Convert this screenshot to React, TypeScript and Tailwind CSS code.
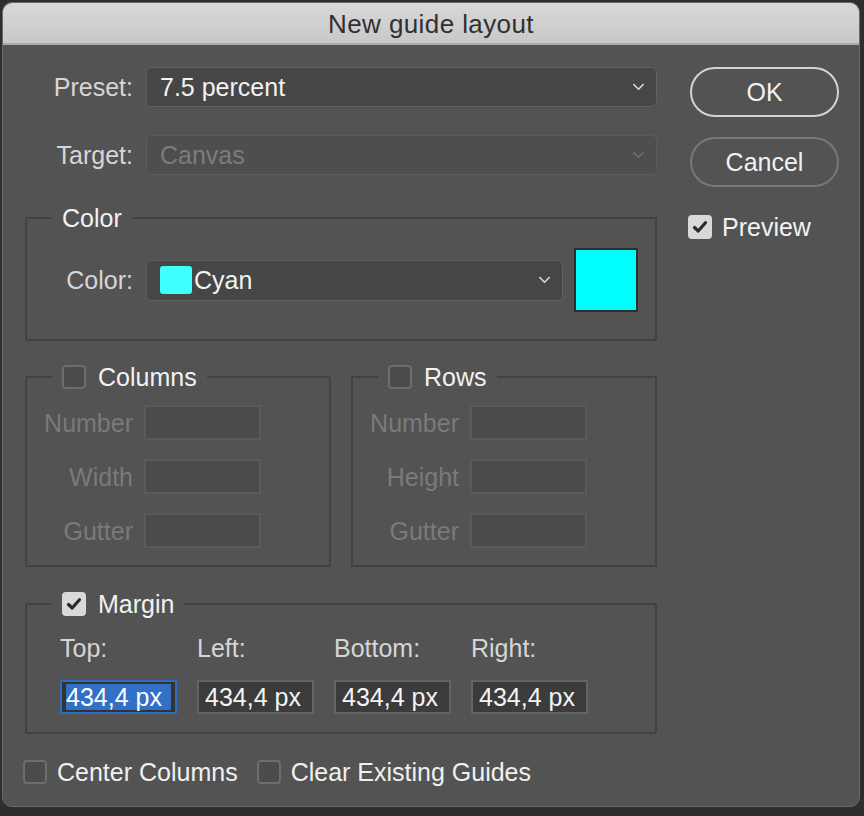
import React from "react";

const Chevron = ({ color = "#d8d8d8" }: { color?: string }) => (
  <svg width="13" height="8" viewBox="0 0 13 8" fill="none">
    <path d="M1.8 1.5 L6.5 6.3 L11.2 1.5" stroke={color} strokeWidth="1.6" strokeLinecap="round" strokeLinejoin="round" />
  </svg>
);

const Check = ({ checked }: { checked?: boolean }) =>
  checked ? (
    <div className="w-[24px] h-[24px] rounded-[4px] bg-[#d9d9d9] flex items-center justify-center shrink-0">
      <svg width="16" height="14" viewBox="0 0 16 14" fill="none">
        <path d="M2.5 7.5 L6.2 11 L13.5 2.8" stroke="#2b2b2b" strokeWidth="3.2" strokeLinecap="round" strokeLinejoin="round" />
      </svg>
    </div>
  ) : (
    <div className="w-[24px] h-[24px] rounded-[4px] bg-[#4b4b4b] border-2 border-[#6d6d6d] shrink-0" />
  );

const DisabledField = ({ label }: { label: string }) => (
  <div className="flex items-center h-[35px]">
    <div className="w-[106px] text-right text-[#7a7a7a]">{label}</div>
    <div className="ml-[11px] w-[117px] h-[35px] bg-[#4b4b4b] border-2 border-[#5a5a5a]" />
  </div>
);

export default function App() {
  return (
    <div
      className="w-[864px] h-[816px] bg-[#2e2e2e] overflow-hidden pt-[2px] pl-[2px]"
      style={{ fontFamily: '"Liberation Sans", Arial, sans-serif' }}
    >
      <div className="w-[858px] h-[805px] rounded-[10px] overflow-hidden bg-[#535353] flex flex-col border border-[#6a6a6a] text-[25px] leading-[28px]">
        {/* Title bar */}
        <div className="h-[42px] shrink-0 bg-gradient-to-b from-[#d8d8d8] to-[#c8c8c8] border-b-2 border-[#a9a9a9] flex items-center justify-center pt-[2px]">
          <span className="text-[#303030] text-[26px] tracking-[0.4px]">New guide layout</span>
        </div>

        {/* Body */}
        <div className="flex pl-[22px] pt-[22px]">
          {/* Left column */}
          <div className="w-[632px] flex flex-col">
            {/* Preset */}
            <div className="flex items-center h-[40px]">
              <div className="w-[108px] text-right text-[#d6d6d6]">Preset:</div>
              <div className="ml-[13px] w-[511px] h-[40px] rounded-[5px] bg-[#464646] border border-[#606060] flex items-center pl-[13px] pr-[11px]">
                <span className="text-[#f2f2f2] flex-1">7.5 percent</span>
                <Chevron />
              </div>
            </div>
            {/* Target */}
            <div className="flex items-center h-[40px] mt-[28px]">
              <div className="w-[108px] text-right text-[#d6d6d6]">Target:</div>
              <div className="ml-[13px] w-[511px] h-[40px] rounded-[5px] bg-[#4e4e4e] border border-[#5c5c5c] flex items-center pl-[13px] pr-[11px]">
                <span className="text-[#7c7c7c] flex-1">Canvas</span>
                <Chevron color="#6e6e6e" />
              </div>
            </div>

            {/* Color group */}
            <fieldset className="mt-[29px] border-2 border-[#424242] rounded-[2px] pb-[27px]">
              <legend className="ml-[25px] px-[10px] text-[#f2f2f2]">Color</legend>
              <div className="flex items-center mt-[16px] h-[64px]">
                <div className="w-[106px] text-right text-[#d6d6d6]">Color:</div>
                <div className="ml-[13px] w-[417px] h-[41px] rounded-[5px] bg-[#464646] border border-[#606060] flex items-center pl-[13px] pr-[11px]">
                  <div className="w-[32px] h-[28px] rounded-[3px] bg-[#40ffff] mr-[2px]" />
                  <span className="text-[#f2f2f2] flex-1">Cyan</span>
                  <Chevron />
                </div>
                <div className="ml-[11px] w-[64px] h-[64px] bg-[#00ffff] border-2 border-[#2e2e2e]" />
              </div>
            </fieldset>

            {/* Columns / Rows */}
            <div className="flex gap-[20px] mt-[22px]">
              <fieldset className="w-[306px] border-2 border-[#424242] rounded-[2px] pb-[17px]">
                <legend className="ml-[25px] px-[10px]">
                  <div className="flex items-center gap-[12px] text-[#f2f2f2]">
                    <Check />
                    <span>Columns</span>
                  </div>
                </legend>
                <div className="flex flex-col gap-[19px] mt-[14px]">
                  <DisabledField label="Number" />
                  <DisabledField label="Width" />
                  <DisabledField label="Gutter" />
                </div>
              </fieldset>
              <fieldset className="w-[306px] border-2 border-[#424242] rounded-[2px] pb-[17px]">
                <legend className="ml-[25px] px-[10px]">
                  <div className="flex items-center gap-[12px] text-[#f2f2f2]">
                    <Check />
                    <span>Rows</span>
                  </div>
                </legend>
                <div className="flex flex-col gap-[19px] mt-[14px]">
                  <DisabledField label="Number" />
                  <DisabledField label="Height" />
                  <DisabledField label="Gutter" />
                </div>
              </fieldset>
            </div>

            {/* Margin */}
            <fieldset className="mt-[23px] border-2 border-[#424242] rounded-[2px] pb-[18px]">
              <legend className="ml-[25px] px-[10px]">
                <div className="flex items-center gap-[12px] text-[#f2f2f2]">
                  <Check checked />
                  <span>Margin</span>
                </div>
              </legend>
              <div className="grid grid-cols-[117px_117px_117px_117px] gap-x-[20px] pl-[33px] mt-[16px]">
                <div className="text-[#d6d6d6]">Top:</div>
                <div className="text-[#d6d6d6]">Left:</div>
                <div className="text-[#d6d6d6]">Bottom:</div>
                <div className="text-[#d6d6d6]">Right:</div>
                <div className="mt-[18px] h-[34px] border-2 border-[#2b6cc4] bg-[#333333] flex items-center px-[4px]">
                  <span className="bg-[#3170c4] text-white leading-[26px] h-[26px] w-full">434,4 px</span>
                </div>
                <div className="mt-[18px] h-[34px] border-2 border-[#646464] bg-[#3b3b3b] flex items-center pl-[6px] text-[#f4f4f4]">434,4 px</div>
                <div className="mt-[18px] h-[34px] border-2 border-[#646464] bg-[#3b3b3b] flex items-center pl-[6px] text-[#f4f4f4]">434,4 px</div>
                <div className="mt-[18px] h-[34px] border-2 border-[#646464] bg-[#3b3b3b] flex items-center pl-[6px] text-[#f4f4f4]">434,4 px</div>
              </div>
            </fieldset>

            {/* Bottom checkboxes */}
            <div className="flex items-center mt-[24px] -ml-[2px] h-[28px] text-[#f0f0f0]">
              <Check />
              <span className="ml-[10px]">Center Columns</span>
              <div className="ml-[19px]">
                <Check />
              </div>
              <span className="ml-[10px]">Clear Existing Guides</span>
            </div>
          </div>

          {/* Right column */}
          <div className="ml-[31px] flex flex-col">
            <div className="ml-[2px] w-[149px] h-[50px] rounded-full border-2 border-[#d4d4d4] flex items-center justify-center text-[#f2f2f2]">
              OK
            </div>
            <div className="ml-[2px] mt-[20px] w-[149px] h-[50px] rounded-full border-2 border-[#787878] flex items-center justify-center text-[#f2f2f2]">
              Cancel
            </div>
            <div className="mt-[26px] flex items-center gap-[10px] text-[#f2f2f2]">
              <Check checked />
              <span>Preview</span>
            </div>
          </div>
        </div>
      </div>
    </div>
  );
}
